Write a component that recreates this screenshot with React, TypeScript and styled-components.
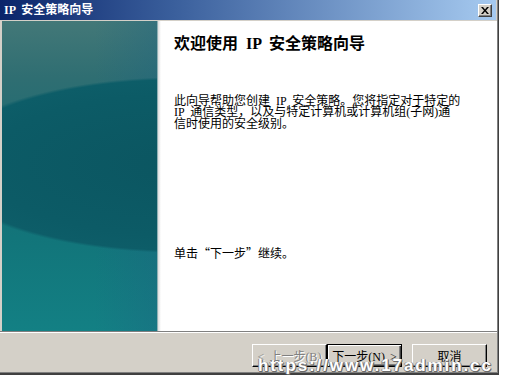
import styled, { createGlobalStyle } from "styled-components";

const GlobalStyle = createGlobalStyle`
  html, body {
    margin: 0;
    padding: 0;
    background: #ffffff;
  }
  #root {
    width: 505px;
    height: 378px;
    overflow: hidden;
    position: relative;
  }
`;

const CJK = `"Liberation Serif", "Noto Sans CJK SC", serif`;

export default function App() {
  return (
    <>
      <GlobalStyle />
      <Window>
        <TitleBar>
          <Title>IP 安全策略向导</Title>
          <CloseButton>
            <svg width="8" height="7" viewBox="0 0 8 7">
              <path
                d="M0 0h2l2 2.5L6 0h2L5 3.5 8 7H6L4 4.5 2 7H0l3-3.5z"
                fill="#000"
              />
            </svg>
          </CloseButton>
        </TitleBar>
        <Body>
          <SidePanel />
          <Content>
            <Heading>欢迎使用 IP 安全策略向导</Heading>
            <Paragraph>
              此向导帮助您创建 IP 安全策略。您将指定对于特定的
              <br />
              IP 通信类型，以及与特定计算机或计算机组(子网)通
              <br />
              信时使用的安全级别。
            </Paragraph>
            <Spacer />
            <Paragraph>
              单击<Quote>“</Quote>下一步<Quote>”</Quote>继续。
            </Paragraph>
          </Content>
        </Body>
        <Footer>
          <ButtonGroup>
            <Button $disabled>&lt; 上一步(B)</Button>
            <Button $default>下一步(N) &gt;</Button>
          </ButtonGroup>
          <Button>取消</Button>
        </Footer>
      </Window>
      <Watermark>https://www.17admin.cc</Watermark>
    </>
  );
}

const Window = styled.div`
  width: 499px;
  height: 375px;
  box-sizing: border-box;
  background: #d4d0c8;
  border-right: 1px solid #404040;
  border-bottom: 2px solid #404040;
  box-shadow: inset -1px -1px 0 #808080;
  display: flex;
  flex-direction: column;
  font-family: ${CJK};
`;

const TitleBar = styled.div`
  height: 20px;
  margin: 0 2px 0 0;
  box-sizing: border-box;
  padding: 0 4px 0 4px;
  display: flex;
  align-items: center;
  justify-content: space-between;
  background: linear-gradient(to right, #0a246a 0%, #3a5f9c 35%, #a6caf0 100%);
`;

const Title = styled.span`
  color: #ffffff;
  font-weight: bold;
  font-size: 12px;
  word-spacing: 3px;
  line-height: 1;
`;

const CloseButton = styled.div`
  width: 14px;
  height: 13px;
  margin-top: 1px;
  box-sizing: border-box;
  background: #d4d0c8;
  border-top: 1px solid #ffffff;
  border-left: 1px solid #ffffff;
  border-right: 1px solid #404040;
  border-bottom: 1px solid #404040;
  box-shadow: inset -1px -1px 0 #808080;
  display: flex;
  align-items: center;
  justify-content: center;
`;

const Body = styled.div`
  height: 310px;
  margin-top: 1px;
  display: flex;
  padding-left: 2px;
  margin-right: 1px;
  border-bottom: 1px solid #808080;
  box-shadow: 0 1px 0 #ffffff;
`;

const SidePanel = styled.div`
  width: 155px;
  flex: none;
  border-right: 1px solid #8fb0b4;
  background:
    radial-gradient(ellipse 246px 88px at 180px 144px, #0b5661 0%, #0c5b66 80%, #0d5d68 97%, rgba(13, 93, 104, 0) 100%),
    linear-gradient(to right, rgba(255, 255, 255, 0) 60%, rgba(30, 100, 130, 0.35) 100%),
    linear-gradient(to bottom, #437878 0%, #2f6e72 18%, #1a6b72 45%, #12757a 70%, #138084 100%);
`;

const Content = styled.div`
  flex: 1;
  background: linear-gradient(to right, #dcdcdc 0px, #f4f4f4 2px, #ffffff 3px);
  padding: 14px 0 0 16px;
  display: flex;
  flex-direction: column;
`;

const Heading = styled.div`
  font-size: 16px;
  font-weight: bold;
  line-height: 18px;
  color: #000000;
  word-spacing: 4px;
`;

const Paragraph = styled.div`
  margin-top: 43px;
  font-size: 12px;
  line-height: 11.4px;
  color: #000000;
  word-spacing: 3px;
  &:last-child {
    margin-top: 0;
  }
`;

const Quote = styled.span`
  font-family: "Noto Sans CJK SC", sans-serif;
`;

const Spacer = styled.div`
  height: 117px;
`;

const Footer = styled.div`
  flex: 1;
  display: flex;
  justify-content: flex-end;
  align-items: flex-start;
  gap: 10px;
  padding: 12px 11px 0 0;
`;

const ButtonGroup = styled.div`
  display: flex;
`;

const Button = styled.div<{ $disabled?: boolean; $default?: boolean }>`
  width: 75px;
  height: 23px;
  box-sizing: border-box;
  display: flex;
  align-items: center;
  justify-content: center;
  font-size: 12px;
  background: #d4d0c8;
  color: ${(p) => (p.$disabled ? "#808080" : "#000000")};
  text-shadow: ${(p) => (p.$disabled ? "1px 1px 0 #ffffff" : "none")};
  border-top: 1px solid ${(p) => (p.$default ? "#000000" : "#ffffff")};
  border-left: 1px solid ${(p) => (p.$default ? "#000000" : "#ffffff")};
  border-right: 1px solid #000000;
  border-bottom: 1px solid #000000;
  box-shadow: ${(p) =>
    p.$default
      ? "inset 1px 1px 0 #ffffff, inset -1px -1px 0 #404040, inset -2px -2px 0 #808080"
      : "inset -1px -1px 0 #808080"};
  word-spacing: 2px;
`;

const Watermark = styled.div`
  position: absolute;
  left: 258px;
  top: 356px;
  font-family: "Liberation Sans", sans-serif;
  font-weight: bold;
  font-size: 17px;
  letter-spacing: 1.9px;
  color: #ffffff;
  white-space: nowrap;
  text-shadow:
    1px 1px 0 #6a6a6a,
    -1px 0 0 #8a8a8a,
    0 1px 0 #6a6a6a,
    1px 0 0 #8a8a8a;
`;
